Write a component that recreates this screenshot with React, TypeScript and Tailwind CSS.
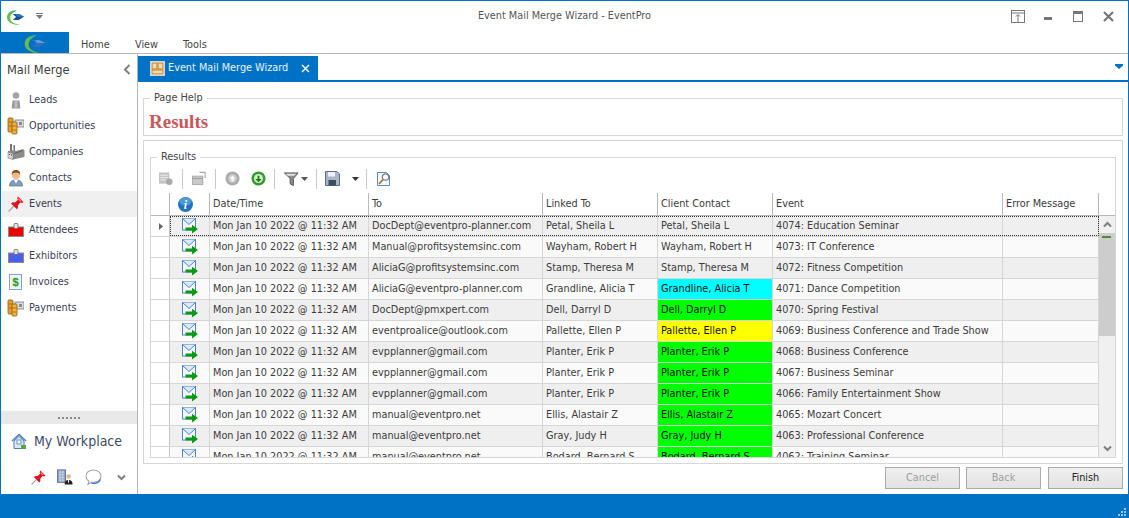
import React from "react";

const Logo = ({ w = 18, h = 16, onBlue = false }: { w?: number; h?: number; onBlue?: boolean }) => (
  <svg width={w} height={h} viewBox="0 0 16 14">
    <path d="M9 0.300C3.500 0.100 0 3 0 7c0 4.200 5 7.400 12.500 6.800C6.500 13 3 10.800 3 7.500 3 4.500 5.500 1.700 9 0.300Z" fill="#69bf45" />
    <path d="M9 0.300C5.500 0.500 2.500 2.500 1.500 4.500 3 3 5 1.800 7 1.500Z" fill={onBlue ? "#2fb0a8" : "#2aa0c8"} />
    <path d="M5.500 3.800H11.500L16 6.300 11 9.300H5.500L8.500 6.500Z" fill={onBlue ? "#2e6fc0" : "#12509c"} />
    <path d="M8 3.800h3.500L16 6.300H9.500Z" fill={onBlue ? "#5f9adf" : "#2d78c4"} />
  </svg>
);

const Pin = ({ s = 16 }: { s?: number }) => (
  <svg width={s} height={s} viewBox="0 0 16 16">
    <path d="M0.500 15.500 6 10" stroke="#a8a8a8" strokeWidth="1.200" />
    <path d="M10 0.500 15.500 6 14 7 12.300 6.500 9.800 9.500c.5 1.500.2 2.700-.9 3.800L3 7.500C4 6.500 5.400 6 7 6.500L9.800 4 9.200 2Z" fill="#e0141c" />
    <path d="M10.300 1.800 13.800 5.300 12 5.500 10.300 3.500Z" fill="#ff8080" />
  </svg>
);

const Person = () => (
  <svg width="16" height="18" viewBox="0 0 16 18">
    <circle cx="8" cy="4.500" r="3.300" fill="#a3a3a3" />
    <path d="M4.500 9.500h7l.8 8H3.700Z" fill="#999" />
    <path d="M6.500 9.500h3v8h-3Z" fill="#bdbdbd" />
  </svg>
);

const Coins = () => (
  <svg width="17" height="18" viewBox="0 0 17 18">
    <rect x="8" y="3" width="9" height="7" fill="#d8dde6" stroke="#7a7a7a" strokeWidth="0.800" />
    <rect x="12" y="5" width="3" height="3" fill="#8a8a8a" />
    <rect x="1" y="1" width="5" height="14" rx="1" fill="#e7a12a" stroke="#8f5a10" strokeWidth="0.800" />
    <rect x="5" y="5" width="5" height="12" rx="1" fill="#f2b33c" stroke="#8f5a10" strokeWidth="0.800" />
    <path d="M1.500 5h4M1.500 9h4M5.500 9h4M5.500 13h4" stroke="#8f5a10" strokeWidth="0.700" />
  </svg>
);

const Factory = () => (
  <svg width="18" height="16" viewBox="0 0 18 16">
    <path d="M3 0h2v7H3ZM6.500 1h1.500v6H6.500Z" fill="#777" />
    <path d="M1 7l5-1 3 1 7-2 1.500 1.500V13L6 15.500 1 14Z" fill="#8c8c8c" />
    <path d="M1 8l5 1.500V15.500L1 14Z" fill="#d9d9d9" stroke="#666" strokeWidth="0.500" />
    <path d="M2 10.500h1M4 11h1" stroke="#333" strokeWidth="1" />
    <path d="M7 9.500l9-3" stroke="#555" strokeWidth="0.800" />
  </svg>
);

const Contact = () => (
  <svg width="16" height="18" viewBox="0 0 16 18">
    <path d="M1.500 17c0-4 2-6 6.500-6s6.500 2 6.500 6Z" fill="#7f9fc0" stroke="#50607a" strokeWidth="0.600" />
    <path d="M6 11h4l-2 3.500Z" fill="#fff" />
    <circle cx="8" cy="6" r="4" fill="#f0b98a" />
    <path d="M3.800 6C3.300 2.500 5.500 1 8 1s4.700 1.500 4.200 5C11.500 4 10 3.800 8 3.800S4.500 4 3.800 6Z" fill="#8a4a1c" />
  </svg>
);

const Badge = ({ color }: { color: string }) => (
  <svg width="16" height="14" viewBox="0 0 16 14">
    <rect x="0.500" y="4" width="15" height="9.500" fill={color} stroke="#8a8a8a" />
    <rect x="6" y="0.500" width="4" height="5" rx="1" fill="#e4e4e4" stroke="#666" strokeWidth="0.800" />
  </svg>
);

const Invoice = () => (
  <svg width="13" height="16" viewBox="0 0 13 16">
    <rect x="0.500" y="0.500" width="12" height="15" fill="#f2f6fa" stroke="#7fa5cc" />
    <rect x="2.500" y="3" width="8" height="10" fill="#e4ecdc" />
    <text x="6.500" y="12" textAnchor="middle" fontSize="11" fontWeight="700" fill="#1c9a1c" fontFamily="Liberation Sans">$</text>
  </svg>
);

const Home = () => (
  <svg width="16" height="17" viewBox="0 0 16 17">
    <path d="M1 8 8 1.500 15 8" fill="none" stroke="#4e7fb4" strokeWidth="1.600" />
    <path d="M3 8v7.500h10V8L8 3.500Z" fill="#dce8f4" stroke="#4e7fb4" />
    <rect x="6" y="7" width="4" height="4" fill="#fff" stroke="#4e7fb4" strokeWidth="0.800" />
    <rect x="10" y="12" width="5" height="4" fill="#54a844" />
  </svg>
);

const Building = () => (
  <svg width="16" height="16" viewBox="0 0 18 17">
    <rect x="0.500" y="0.500" width="9" height="14" fill="#8fa3c2" stroke="#5c6f8c" />
    <path d="M2 3h6M2 6h6M2 9h6M2 12h6M3.500 1v13M6.500 1v13" stroke="#dbe3ee" strokeWidth="0.700" />
    <circle cx="13" cy="8" r="2.500" fill="#e6b78a" />
    <path d="M8.500 17c0-3.500 1.500-5 4.500-5s4.500 1.500 4.500 5Z" fill="#222" />
    <path d="M12.500 12h1v3h-1Z" fill="#fff" />
  </svg>
);

const Chat = () => (
  <svg width="17" height="17" viewBox="0 0 17 17">
    <path d="M8.500 1C4 1 1 3.700 1 7.200c0 2 1 3.700 2.800 4.800L3 15.500l3.500-2.400c.6.100 1.300.2 2 .2 4.500 0 7.500-2.700 7.500-6.100S13 1 8.500 1Z" fill="#fff" stroke="#a6a6a6" strokeWidth="1.100" />
    <path d="M6.500 14.200c3.500.5 7.500-.6 9-3.700" fill="none" stroke="#2a78c8" strokeWidth="1.200" />
  </svg>
);

const Chevron = ({ up = false }: { up?: boolean }) => (
  <svg width="9" height="7" viewBox="0 0 9 7">
    <path d={up ? "M1 5.500 4.500 2 8 5.500" : "M1 1.500 4.500 5 8 1.500"} fill="none" stroke="#808080" strokeWidth="2" />
  </svg>
);

const Mail = () => (
  <svg width="16" height="16" viewBox="0 0 16 16">
    <rect x="0.500" y="0.500" width="13" height="11.500" fill="#f3f7fd" stroke="#4b84c4" />
    <path d="M0.500 0.500 7 6.500l6.500-6" fill="#dde9f8" stroke="#4b84c4" />
    <path d="M3.500 9.500h6.500V6.800L16 11l-6 4.500v-3H3.500Z" fill="#0c9a12" />
  </svg>
);

const Dropdown = ({ color = "#555" }: { color?: string }) => (
  <svg width="7" height="4" viewBox="0 0 7 4">
    <path d="M0 0h7L3.500 4Z" fill={color} />
  </svg>
);

const Sep = () => <div className="h-[20px] w-px bg-[#c9c9c9]" />;

const navItems: [string, React.ReactNode][] = [
  ["Leads", <Person />],
  ["Opportunities", <Coins />],
  ["Companies", <Factory />],
  ["Contacts", <Contact />],
  ["Events", <Pin />],
  ["Attendees", <Badge color="#ee0000" />],
  ["Exhibitors", <Badge color="#4a5fe8" />],
  ["Invoices", <Invoice />],
  ["Payments", <Coins />],
];

type Row = [string, string, string, string, string];
const rows: Row[] = [
  ["DocDept@eventpro-planner.com", "Petal, Sheila L", "Petal, Sheila L", "4074: Education Seminar", ""],
  ["Manual@profitsystemsinc.com", "Wayham, Robert H", "Wayham, Robert H", "4073: IT Conference", ""],
  ["AliciaG@profitsystemsinc.com", "Stamp, Theresa M", "Stamp, Theresa M", "4072: Fitness Competition", ""],
  ["AliciaG@eventpro-planner.com", "Grandline, Alicia T", "Grandline, Alicia T", "4071: Dance Competition", "bg-[#00ffff]"],
  ["DocDept@pmxpert.com", "Dell, Darryl D", "Dell, Darryl D", "4070: Spring Festival", "bg-[#00ff00]"],
  ["eventproalice@outlook.com", "Pallette, Ellen P", "Pallette, Ellen P", "4069: Business Conference and Trade Show", "bg-[#ffff00]"],
  ["evpplanner@gmail.com", "Planter, Erik P", "Planter, Erik P", "4068: Business Conference", "bg-[#00ff00]"],
  ["evpplanner@gmail.com", "Planter, Erik P", "Planter, Erik P", "4067: Business Seminar", "bg-[#00ff00]"],
  ["evpplanner@gmail.com", "Planter, Erik P", "Planter, Erik P", "4066: Family Entertainment Show", "bg-[#00ff00]"],
  ["manual@eventpro.net", "Ellis, Alastair Z", "Ellis, Alastair Z", "4065: Mozart Concert", "bg-[#00ff00]"],
  ["manual@eventpro.net", "Gray, Judy H", "Gray, Judy H", "4063: Professional Conference", "bg-[#00ff00]"],
  ["manual@eventpro.net", "Bodard, Bernard S", "Bodard, Bernard S", "4062: Training Seminar", "bg-[#00ff00]"],
];

const Cell = ({ w, children, cls = "" }: { w: string; children?: React.ReactNode; cls?: string }) => (
  <div className={`${w} ${cls} flex h-full shrink-0 items-center overflow-hidden whitespace-nowrap border-r border-[#d6d6d6] pl-[3px] pt-px`}>{children}</div>
);

const HeadCell = ({ w, children }: { w: string; children?: React.ReactNode }) => (
  <div className={`${w} flex h-full shrink-0 items-center border-r border-[#b8b8b8] pl-[3px] pt-px`}>{children}</div>
);

const Btn = ({ label, on = false }: { label: string; on?: boolean }) => (
  <div className={`flex h-[22px] w-[75px] items-center justify-center border border-[#ababab] bg-gradient-to-b from-[#f0f0f0] to-[#e2e2e2] ${on ? "text-[#222]" : "text-[#9e9e9e]"}`}>{label}</div>
);

export default function App() {
  return (
    <div className="flex h-[518px] w-[1129px] flex-col overflow-hidden border-x border-t border-[#0072c6] bg-white font-['DejaVu_Sans_Condensed','DejaVu_Sans',sans-serif] text-[10.8px] text-[#3c3c3c]">
      {/* title bar */}
      <div className="flex h-[31px] shrink-0 items-center">
        <div className="ml-[6px] mt-[2px] w-[18px]"><Logo w={17} h={15} /></div>
        <div className="ml-[11px] w-[7px] pb-[2px]">
          <div className="h-px w-[7px] bg-[#777]" />
          <div className="mt-[1px]"><Dropdown color="#777" /></div>
        </div>
        <div className="flex-1 pl-[78px] text-center text-[#555]">Event Mail Merge Wizard - EventPro</div>
        <div className="flex w-[120px] items-center pl-[3px]">
          <svg width="14" height="13" viewBox="0 0 14 13"><rect x="0.500" y="0.500" width="13" height="12" fill="none" stroke="#777" /><path d="M0.500 3h13M7 12V5M5 6.500 7 4.500l2 2" fill="none" stroke="#777" /></svg>
          <div className="ml-[19px] mt-[3px] h-[3px] w-[8px] bg-[#777]" />
          <svg className="ml-[21px]" width="10" height="11" viewBox="0 0 10 11"><rect x="0.500" y="0.500" width="9" height="10" fill="none" stroke="#777" /><rect x="0" y="0" width="10" height="3" fill="#777" /></svg>
          <svg className="ml-[20px]" width="11" height="11" viewBox="0 0 11 11"><path d="M1 1l9 9M10 1l-9 9" stroke="#777" strokeWidth="2.200" /></svg>
        </div>
      </div>
      {/* ribbon tabs */}
      <div className="flex h-[22px] shrink-0 border-b border-[#b9b9b9]">
        <div className="flex h-[21px] w-[68px] items-end justify-center bg-[#0072c6]"><Logo w={22} h={18} onBlue /></div>
        <div className="ml-[12px] flex h-full items-center pt-[5px] text-[#444]">
          <span className="w-[54px]">Home</span>
          <span className="w-[48px]">View</span>
          <span>Tools</span>
        </div>
      </div>
      {/* main */}
      <div className="flex min-h-0 flex-1">
        {/* sidebar */}
        <div className="flex w-[137px] shrink-0 flex-col border-r border-[#b4b4b4]">
          <div className="flex h-[30px] shrink-0 items-center justify-between pr-[6px] pl-[6px] pt-[1px] text-[12.7px] text-[#3c3c3c]">
            <span>Mail Merge</span>
            <svg width="8" height="11" viewBox="0 0 8 11"><path d="M6.500 1 2 5.500 6.500 10" fill="none" stroke="#808080" strokeWidth="2" /></svg>
          </div>
          <div className="mt-[3px] flex flex-col">
            {navItems.map(([label, icon]) => (
              <div key={label} className={`flex h-[26px] items-center ${label === "Events" ? "bg-[#f0f0f0]" : ""} ml-px`}>
                <div className="flex w-[27px] justify-center">{icon}</div>
                <span className="text-[#3a3f55]">{label}</span>
              </div>
            ))}
          </div>
          <div className="mt-auto flex h-[13px] items-center justify-center gap-px bg-[#e9e9e9]">
            {[0, 1, 2, 3, 4, 5].map((i) => <div key={i} className="mr-px h-[2px] w-[2px] bg-[#8a8a8a]" />)}
          </div>
          <div className="flex h-[34px] items-center pl-[10px] pt-[1px] text-[14px] text-[#3c4a66]">
            <Home />
            <span className="ml-[7px]">My Workplace</span>
          </div>
          <div className="flex h-[36px] items-center pl-[30px] pt-[2px]">
            <Pin s={15} />
            <div className="ml-[11px]"><Building /></div>
            <div className="ml-[12px]"><Chat /></div>
            <div className="ml-[15px]"><Chevron /></div>
          </div>
        </div>
        {/* content */}
        <div className="flex min-w-0 flex-1 flex-col">
          <div className="mt-[2px] flex h-[24px] shrink-0 justify-between">
            <div className="flex w-[180px] items-center bg-[#0072c6] pl-[12px] text-[#eaf3fb]">
              <svg width="15" height="15" viewBox="0 0 15 15"><rect x="0.500" y="0.500" width="14" height="14" fill="#fff" stroke="#c9d6e4" /><rect x="2" y="2" width="5" height="6" fill="#f6d9a8" stroke="#c07a28" /><rect x="8" y="2" width="5" height="6" fill="#f6d9a8" stroke="#c07a28" /><rect x="2" y="9" width="11" height="4" fill="#f6d9a8" stroke="#c07a28" /></svg>
              <span className="ml-[3px]">Event Mail Merge Wizard</span>
              <svg className="ml-[13px]" width="9" height="9" viewBox="0 0 9 9"><path d="M1 1l7 7M8 1l-7 7" stroke="#fff" strokeWidth="1.400" /></svg>
            </div>
            <div className="mr-[5px] mt-[8px]"><svg width="8" height="5" viewBox="0 0 8 5"><path d="M0 0h8v1.500L4 5 0 1.500Z" fill="#0072c6" /></svg></div>
          </div>
          <div className="h-[2px] shrink-0 bg-[#0072c6]" />
          {/* body */}
          <div className="flex min-h-0 flex-1 flex-col px-[5px] pt-[16px]">
            {/* page help */}
            <div className="h-[38px] shrink-0 border border-[#d6d6d6]">
              <div className="-mt-[8px] ml-[6px] w-fit bg-white px-[4px] leading-[14px] text-[#444]">Page Help</div>
              <div className="ml-[5px] mt-[6px] font-['Liberation_Serif',serif] text-[19px] font-bold leading-[22px] text-[#c9575c]">Results</div>
            </div>
            {/* outer results panel */}
            <div className="mt-[4px] h-[324px] shrink-0 border border-[#d6d6d6] px-[6px] pt-[16px]">
              {/* inner group */}
              <div className="flex h-[301px] flex-col border border-[#d6d6d6]">
                <div className="-mt-[8px] ml-[6px] h-[14px] w-fit shrink-0 bg-white px-[4px] leading-[14px] text-[#444]">Results</div>
                <div className="flex h-[29px] shrink-0 items-center pl-[8px]">
                  <svg width="14" height="15" viewBox="0 0 15 15"><rect x="0" y="1" width="11" height="12" fill="#c4c4c4" /><path d="M1.500 4h8M1.500 6.500h8M1.500 9h8" stroke="#eee" /><circle cx="11" cy="11" r="3.500" fill="#a8a8a8" /></svg>
                  <div className="ml-[9px]"><Sep /></div>
                  <svg className="ml-[9px]" width="15" height="15" viewBox="0 0 16 15"><rect x="0.500" y="5" width="11" height="9" fill="#c9c9c9" stroke="#aaa" /><path d="M0.500 7.500h11" stroke="#999" /><path d="M8 1h6v6" fill="none" stroke="#aaa" strokeWidth="1.200" /></svg>
                  <div className="ml-[8px]"><Sep /></div>
                  <svg className="ml-[9px]" width="15" height="15" viewBox="0 0 16 16"><circle cx="8" cy="8" r="7.500" fill="#ababab" /><circle cx="8" cy="8" r="4.500" fill="#d0d0d0" /><path d="M8 5l3 3H9v3H7V8H5Z" fill="#fff" /></svg>
                  <svg className="ml-[11px]" width="15" height="15" viewBox="0 0 16 16"><circle cx="8" cy="8" r="7.500" fill="#2f9b2f" /><circle cx="8" cy="8" r="4.800" fill="#d8f0c8" /><path d="M8 12 4.500 8.500H7V5h2v3.500h2.500Z" fill="#1f7a1f" /></svg>
                  <div className="ml-[8px]"><Sep /></div>
                  <svg className="ml-[9px]" width="15" height="16" viewBox="0 0 16 16"><path d="M0.500 1.500h14.500L10 7.500V15l-3.500-2V7.500Z" fill="#8a8a8a" stroke="#555" /><path d="M2 2.500h11l-2 2H4Z" fill="#e2e2e2" /></svg>
                  <div className="ml-[2px]"><Dropdown /></div>
                  <div className="ml-[8px]"><Sep /></div>
                  <svg className="ml-[8px]" width="15" height="15" viewBox="0 0 15 15"><path d="M0.500 0.500h11.500l2.500 2.500v11.500H0.500Z" fill="#a9b6c8" stroke="#5a6b84" /><rect x="3" y="1" width="7" height="4.500" fill="#eef2f8" /><rect x="3.500" y="9" width="7.500" height="5.500" fill="#3a4a60" /></svg>
                  <div className="ml-[12px]"><Dropdown color="#333" /></div>
                  <div className="ml-[7px]"><Sep /></div>
                  <svg className="ml-[10px]" width="14" height="16" viewBox="0 0 14 16"><path d="M0.500 1.500h9l3 3v10H0.500Z" fill="#f4f8fc" stroke="#5b8fc9" /><circle cx="8.500" cy="6" r="3.200" fill="#fff" stroke="#777" strokeWidth="1.200" /><path d="M6 8.500 2 13" stroke="#a8752c" strokeWidth="1.800" /></svg>
                </div>
                {/* grid */}
                <div className="flex min-h-0 flex-1 flex-col overflow-hidden">
                  <div className="flex h-[23px] shrink-0 border-b border-[#b8b8b8]">
                    <div className="h-full w-[19px] shrink-0 border-r border-[#b8b8b8]" />
                    <div className="flex h-full w-[40px] shrink-0 items-center justify-center border-r border-[#b8b8b8] pr-[9px]">
                      <svg width="15" height="15" viewBox="0 0 15 15"><circle cx="7.500" cy="7.500" r="7.500" fill="#1f73c2" /><ellipse cx="7.500" cy="4.500" rx="6" ry="4" fill="#6db3ea" opacity="0.600" /><text x="7.500" y="12" textAnchor="middle" fontSize="12" fontWeight="700" fontStyle="italic" fill="#fff" fontFamily="Liberation Serif">i</text></svg>
                    </div>
                    <HeadCell w="w-[159px]">Date/Time</HeadCell>
                    <HeadCell w="w-[174px]">To</HeadCell>
                    <HeadCell w="w-[115px]">Linked To</HeadCell>
                    <HeadCell w="w-[115px]">Client Contact</HeadCell>
                    <HeadCell w="w-[230px]">Event</HeadCell>
                    <HeadCell w="w-[96px]">Error Message</HeadCell>
                  </div>
                  <div className="flex min-h-0 flex-1">
                    <div className="w-[948px] shrink-0 overflow-hidden">
                      {rows.map((r, i) => (
                        <div key={i} className={`relative flex h-[21px] border-b border-[#d6d6d6] ${i % 2 === 0 ? "bg-[#efefef]" : "bg-[#fafafa]"}`}>
                          <div className="flex h-full w-[19px] shrink-0 items-center justify-center border-r border-[#c4c4c4] bg-white pl-[2px]">
                            {i === 0 && <svg width="4" height="7" viewBox="0 0 4 7"><path d="M0 0l4 3.500L0 7Z" fill="#666" /></svg>}
                          </div>
                          <div className="flex h-full w-[40px] shrink-0 items-center justify-center border-r border-[#d6d6d6]"><Mail /></div>
                          <Cell w="w-[159px]">Mon Jan 10 2022 @ 11:32 AM</Cell>
                          <Cell w="w-[174px]">{r[0]}</Cell>
                          <Cell w="w-[115px]">{r[1]}</Cell>
                          <Cell w="w-[115px]" cls={r[4] ? `${r[4]} text-[#111]` : ""}>{r[2]}</Cell>
                          <Cell w="w-[230px]">{r[3]}</Cell>
                          <Cell w="w-[96px]" />
                          {i === 0 && <div className="absolute inset-y-0 left-[19px] right-0 border border-dotted border-[#333]" />}
                        </div>
                      ))}
                    </div>
                    <div className="flex w-[16px] shrink-0 flex-col bg-[#f0f0f0]">
                      <div className="flex h-[17px] items-center justify-center"><Chevron up /></div>
                      <div className="relative h-[103px] bg-[#cdcdcd]">
                        <div className="absolute left-[3px] top-[3px] h-[2px] w-[9px] bg-[#4a8c3c]" />
                      </div>
                      <div className="flex-1" />
                      <div className="flex h-[17px] items-center justify-center"><Chevron /></div>
                    </div>
                  </div>
                </div>
              </div>
            </div>
            {/* buttons */}
            <div className="mt-[3px] flex justify-end gap-[6px]">
              <Btn label="Cancel" />
              <Btn label="Back" />
              <div className="ml-px"><Btn label="Finish" on /></div>
            </div>
          </div>
        </div>
      </div>
      {/* status bar */}
      <div className="flex h-[24px] shrink-0 items-end justify-end bg-[#0072c6] pb-[2px] pr-[2px]">
        <svg width="8" height="8" viewBox="0 0 8 8" fill="#9cc7e8"><rect x="6" y="0" width="2" height="2" /><rect x="3" y="3" width="2" height="2" /><rect x="6" y="3" width="2" height="2" /><rect x="0" y="6" width="2" height="2" /><rect x="3" y="6" width="2" height="2" /><rect x="6" y="6" width="2" height="2" /></svg>
      </div>
    </div>
  );
}
